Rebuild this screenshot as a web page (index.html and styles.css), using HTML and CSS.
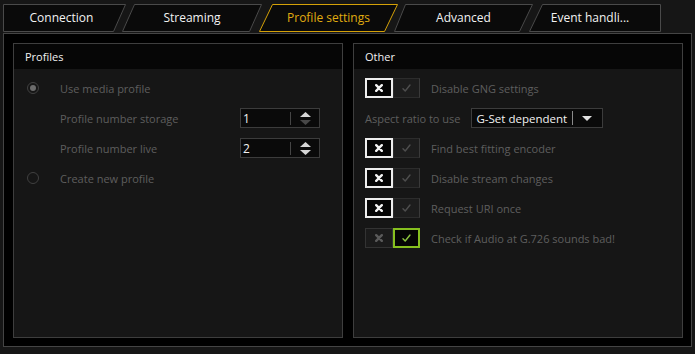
FILE: index.html
```html
<!DOCTYPE html>
<html lang="en">
<head>
    <meta charset="UTF-8">
    <meta name="viewport" content="width=device-width, initial-scale=1.0">
    <title>Profile settings</title>
    <link rel="stylesheet" href="styles.css">
</head>
<body>
    <div class="window">
        <nav class="tabs">
            <div class="tab tab-connection">
                <svg class="tab-shape" viewBox="0 0 123 28"><polygon points="0.5,0.5 122.5,0.5 110.5,27.5 0.5,27.5"/></svg>
                <span class="tab-label">Connection</span>
            </div>
            <div class="tab tab-streaming">
                <svg class="tab-shape" viewBox="0 0 140 28"><polygon points="12.5,0.5 139.5,0.5 127.5,27.5 0.5,27.5"/></svg>
                <span class="tab-label">Streaming</span>
            </div>
            <div class="tab tab-profile active">
                <svg class="tab-shape" viewBox="0 0 139 28"><polygon points="13.5,0.5 138.5,0.5 125.5,27.5 0.5,27.5"/></svg>
                <span class="tab-label">Profile settings</span>
            </div>
            <div class="tab tab-advanced">
                <svg class="tab-shape" viewBox="0 0 139 28"><polygon points="11.5,0.5 138.5,0.5 125.5,27.5 0.5,27.5"/></svg>
                <span class="tab-label">Advanced</span>
            </div>
            <div class="tab tab-events">
                <svg class="tab-shape" viewBox="0 0 132 28"><polygon points="13.5,0.5 131.5,0.5 131.5,27.5 0.5,27.5"/></svg>
                <span class="tab-label">Event handli...</span>
            </div>
        </nav>

        <div class="frame">
            <section class="panel">
                <header class="panel-head">Profiles</header>
                <div class="panel-body profiles">
                    <div class="row">
                        <span class="radio checked"></span>
                        <span class="label">Use media profile</span>
                    </div>
                    <div class="row sub-row">
                        <span class="label field-label">Profile number storage</span>
                        <div class="spin">
                            <span class="spin-value">1</span>
                            <span class="spin-sep"></span>
                            <span class="spin-arrows">
                                <svg width="11" height="5" viewBox="0 0 11 5"><polygon class="arrow" points="0,5 5.5,0 11,5"/></svg>
                                <svg width="11" height="5" viewBox="0 0 11 5"><polygon class="arrow disabled" points="0,0 11,0 5.5,5"/></svg>
                            </span>
                        </div>
                    </div>
                    <div class="row sub-row">
                        <span class="label field-label">Profile number live</span>
                        <div class="spin">
                            <span class="spin-value">2</span>
                            <span class="spin-sep"></span>
                            <span class="spin-arrows">
                                <svg width="11" height="5" viewBox="0 0 11 5"><polygon class="arrow" points="0,5 5.5,0 11,5"/></svg>
                                <svg width="11" height="5" viewBox="0 0 11 5"><polygon class="arrow" points="0,0 11,0 5.5,5"/></svg>
                            </span>
                        </div>
                    </div>
                    <div class="row">
                        <span class="radio"></span>
                        <span class="label">Create new profile</span>
                    </div>
                </div>
            </section>

            <section class="panel">
                <header class="panel-head">Other</header>
                <div class="panel-body other">
                    <div class="row">
                        <div class="toggle is-off">
                            <span class="toggle-x"><svg width="8" height="8" viewBox="0 0 8 8"><path d="M1.2 1.2L6.8 6.8M6.8 1.2L1.2 6.8"/></svg></span>
                            <span class="toggle-check"><svg width="9" height="8" viewBox="0 0 9 8"><path d="M1 4.8L3.2 7L8 1"/></svg></span>
                        </div>
                        <span class="label">Disable GNG settings</span>
                    </div>
                    <div class="row">
                        <span class="label select-label">Aspect ratio to use</span>
                        <div class="select">
                            <span class="select-value">G-Set dependent</span>
                            <span class="select-sep"></span>
                            <svg class="select-arrow" width="10" height="5" viewBox="0 0 10 5"><polygon points="0,0 10,0 5,5"/></svg>
                        </div>
                    </div>
                    <div class="row">
                        <div class="toggle is-off">
                            <span class="toggle-x"><svg width="8" height="8" viewBox="0 0 8 8"><path d="M1.2 1.2L6.8 6.8M6.8 1.2L1.2 6.8"/></svg></span>
                            <span class="toggle-check"><svg width="9" height="8" viewBox="0 0 9 8"><path d="M1 4.8L3.2 7L8 1"/></svg></span>
                        </div>
                        <span class="label">Find best fitting encoder</span>
                    </div>
                    <div class="row">
                        <div class="toggle is-off">
                            <span class="toggle-x"><svg width="8" height="8" viewBox="0 0 8 8"><path d="M1.2 1.2L6.8 6.8M6.8 1.2L1.2 6.8"/></svg></span>
                            <span class="toggle-check"><svg width="9" height="8" viewBox="0 0 9 8"><path d="M1 4.8L3.2 7L8 1"/></svg></span>
                        </div>
                        <span class="label">Disable stream changes</span>
                    </div>
                    <div class="row">
                        <div class="toggle is-off">
                            <span class="toggle-x"><svg width="8" height="8" viewBox="0 0 8 8"><path d="M1.2 1.2L6.8 6.8M6.8 1.2L1.2 6.8"/></svg></span>
                            <span class="toggle-check"><svg width="9" height="8" viewBox="0 0 9 8"><path d="M1 4.8L3.2 7L8 1"/></svg></span>
                        </div>
                        <span class="label">Request URI once</span>
                    </div>
                    <div class="row">
                        <div class="toggle is-on">
                            <span class="toggle-x"><svg width="8" height="8" viewBox="0 0 8 8"><path d="M1.2 1.2L6.8 6.8M6.8 1.2L1.2 6.8"/></svg></span>
                            <span class="toggle-check"><svg width="9" height="8" viewBox="0 0 9 8"><path d="M1 4.8L3.2 7L8 1"/></svg></span>
                        </div>
                        <span class="label">Check if Audio at G.726 sounds bad!</span>
                    </div>
                </div>
            </section>
        </div>
    </div>
</body>
</html>
```

FILE: styles.css
```css
:root {
    --page: #161616;
    --panel: #161616;
    --head: #060606;
    --line: #3e3e3e;
    --field: #0a0a0a;
    --text: #f2f2f2;
    --muted: #5e5e5e;
    --accent: #e0ac10;
    --green: #86bf1f;
}
html, body {
    margin: 0;
    padding: 0;
    background: var(--page);
    font-family: 'Open Sans', 'Noto Sans', Arial, sans-serif;
    color: var(--text);
}
.window {
    padding: 4px 3px 0 3px;
}

/* tabs */
.tabs {
    display: flex;
    height: 28px;
    margin-bottom: 1px;
}
.tab {
    position: relative;
    height: 28px;
    display: flex;
    align-items: center;
    justify-content: center;
    font-size: 12px;
}
.tab-shape {
    position: absolute;
    left: 0;
    top: 0;
    width: 100%;
    height: 100%;
}
.tab-shape polygon {
    fill: #0a0a0a;
    stroke: #4a4a4a;
    stroke-width: 1;
}
.tab-label {
    position: relative;
    line-height: 1;
}
.tab-connection { width: 123px; padding-right: 6px; box-sizing: border-box; }
.tab-streaming { width: 140px; margin-left: -4px; }
.tab-profile { width: 139px; margin-left: -3px; }
.tab-advanced { width: 139px; margin-left: -4px; }
.tab-events { width: 132px; margin-left: -4px; padding-right: 10px; box-sizing: border-box; }
.tab.active .tab-shape polygon {
    stroke: #d4a108;
}
.tab.active .tab-label {
    color: var(--accent);
}

/* frame + panels */
.frame {
    height: 314px;
    box-sizing: border-box;
    border: 1px solid #444;
    background: #000;
    padding: 9px 8px 8px 9px;
    display: grid;
    grid-template-columns: 1fr 1fr;
    gap: 10px;
}
.panel {
    background: var(--panel);
    border: 1px solid var(--line);
    display: flex;
    flex-direction: column;
}
.panel-head {
    height: 25px;
    line-height: 25px;
    background: var(--head);
    padding-left: 11px;
    font-size: 11px;
    color: var(--text);
}
.panel-body {
    padding-top: 4px;
}
.profiles {
    padding-left: 13px;
}
.other {
    padding-left: 11px;
}
.row {
    height: 30px;
    display: flex;
    align-items: center;
}
.label {
    font-size: 11px;
    color: var(--muted);
    white-space: nowrap;
}

/* radios */
.radio {
    width: 12px;
    height: 12px;
    box-sizing: border-box;
    border: 1px solid #404040;
    border-radius: 50%;
    margin-right: 21px;
    display: flex;
    align-items: center;
    justify-content: center;
}
.radio.checked::after {
    content: "";
    width: 6px;
    height: 6px;
    border-radius: 50%;
    background: #6c6c6c;
}

/* spin boxes */
.sub-row {
    padding-left: 33px;
}
.field-label {
    width: 180px;
}
.spin {
    width: 80px;
    height: 20px;
    box-sizing: border-box;
    border: 1px solid #3c3c3c;
    background: var(--field);
    display: flex;
    align-items: center;
}
.spin-value {
    width: 47px;
    padding-left: 2px;
    font-size: 12px;
    color: var(--text);
}
.spin-sep {
    width: 1px;
    height: 13px;
    background: #454545;
}
.spin-arrows {
    flex: 1;
    display: flex;
    flex-direction: column;
    align-items: center;
    gap: 3px;
}
.spin-arrows svg {
    display: block;
}
.arrow {
    fill: #d6d6d6;
}
.arrow.disabled {
    fill: #474747;
}

/* select */
.select-label {
    margin-right: 10px;
}
.select {
    width: 132px;
    height: 20px;
    box-sizing: border-box;
    border: 1px solid #3c3c3c;
    background: var(--field);
    display: flex;
    align-items: center;
}
.select-value {
    width: 95px;
    padding-left: 5px;
    font-size: 11.5px;
    color: var(--text);
    white-space: nowrap;
}
.select-sep {
    width: 1px;
    height: 14px;
    background: #8a8a8a;
}
.select-arrow {
    margin-left: 9px;
}
.select-arrow polygon {
    fill: #e2e2e2;
}

/* toggles */
.toggle {
    display: flex;
    width: 55px;
    height: 20px;
    margin-right: 11px;
}
.toggle > span {
    box-sizing: border-box;
    height: 20px;
    display: flex;
    align-items: center;
    justify-content: center;
}
.toggle-x {
    width: 28px;
}
.toggle-check {
    width: 27px;
}
.toggle svg {
    display: block;
    fill: none;
    stroke-linecap: round;
    stroke-linejoin: round;
}
.toggle-x path {
    stroke-width: 2.4;
}
.toggle-check path {
    stroke-width: 1.4;
}
.toggle.is-off .toggle-x {
    border: 2px solid #eeeeee;
    background: #050505;
}
.toggle.is-off .toggle-x path {
    stroke: #f2f2f2;
}
.toggle.is-off .toggle-check {
    border: 1px solid #2c2c2c;
    border-right-color: #3a3a3a;
    background: #1d1d1d;
}
.toggle.is-off .toggle-check path {
    stroke: #4e4e4e;
}
.toggle.is-on .toggle-x {
    border: 1px solid #333;
    background: #1b1b1b;
}
.toggle.is-on .toggle-x path {
    stroke: #5a5a5a;
}
.toggle.is-on .toggle-check {
    border: 2px solid var(--green);
    background: #050505;
}
.toggle.is-on .toggle-check path {
    stroke: #8cc63f;
}
```
